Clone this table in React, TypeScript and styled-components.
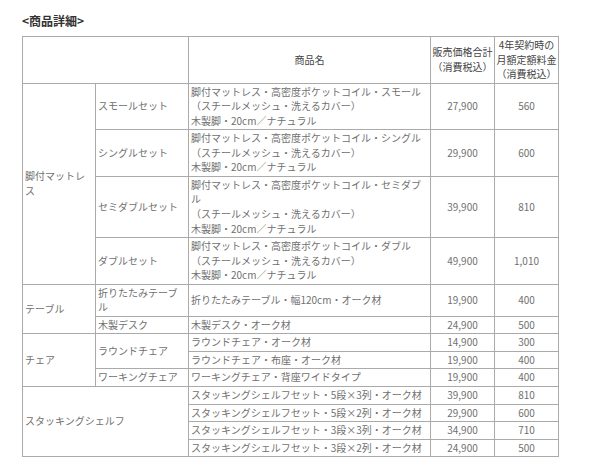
import React from "react";
import styled, { createGlobalStyle } from "styled-components";

const GlobalStyle = createGlobalStyle`
  body {
    margin: 8px;
    background: #fff;
    font-family: "Noto Sans CJK JP", "Noto Sans", sans-serif;
  }
`;

const Page = styled.div`
  padding: 4px 14px 0;
`;

const Title = styled.h3`
  margin: 0 0 6px;
  font-size: 12px;
  line-height: 18px;
  font-weight: bold;
  color: #333;
`;

const Table = styled.table`
  width: 536px;
  table-layout: fixed;
  border-collapse: collapse;
  font-size: 10px;
  line-height: 14.55px;
  color: #707070;
`;

const HeadCell = styled.th`
  border: 1px solid #aaa;
  padding: 1px 0;
  font-weight: normal;
  color: #444;
  text-align: center;
  vertical-align: middle;
  white-space: nowrap;
`;

const Cell = styled.td<{ $align?: "left" | "center" }>`
  border: 1px solid #aaa;
  padding: 1px 2px;
  text-align: ${(p) => p.$align || "left"};
  vertical-align: middle;
  word-break: break-all;
`;

const Price = styled(Cell).attrs({ $align: "center" })``;

interface Item {
  name: React.ReactNode;
  price: string;
  monthly: string;
}

const mattress = (size: string): React.ReactNode => (
  <>
    脚付マットレス・高密度ポケットコイル・{size}
    <br />
    （スチールメッシュ・洗えるカバー）
    <br />
    木製脚・20cm／ナチュラル
  </>
);

const mattressSets: { set: string; item: Item }[] = [
  { set: "スモールセット", item: { name: mattress("スモール"), price: "27,900", monthly: "560" } },
  { set: "シングルセット", item: { name: mattress("シングル"), price: "29,900", monthly: "600" } },
  { set: "セミダブルセット", item: { name: mattress("セミダブル"), price: "39,900", monthly: "810" } },
  { set: "ダブルセット", item: { name: mattress("ダブル"), price: "49,900", monthly: "1,010" } },
];

const shelves: Item[] = [
  { name: "スタッキングシェルフセット・5段×3列・オーク材", price: "39,900", monthly: "810" },
  { name: "スタッキングシェルフセット・5段×2列・オーク材", price: "29,900", monthly: "600" },
  { name: "スタッキングシェルフセット・3段×3列・オーク材", price: "34,900", monthly: "710" },
  { name: "スタッキングシェルフセット・3段×2列・オーク材", price: "24,900", monthly: "500" },
];

const ItemCells = ({ name, price, monthly }: Item) => (
  <>
    <Cell>{name}</Cell>
    <Price>{price}</Price>
    <Price>{monthly}</Price>
  </>
);

const App = () => {
  return (
    <Page>
      <GlobalStyle />
      <Title>&lt;商品詳細&gt;</Title>
      <Table>
        <colgroup>
          <col style={{ width: 73 }} />
          <col style={{ width: 93 }} />
          <col style={{ width: 242 }} />
          <col style={{ width: 64 }} />
          <col style={{ width: 64 }} />
        </colgroup>
        <thead>
          <tr>
            <HeadCell colSpan={2} />
            <HeadCell>商品名</HeadCell>
            <HeadCell>
              販売価格合計
              <br />
              （消費税込）
            </HeadCell>
            <HeadCell>
              4年契約時の
              <br />
              月額定額料金
              <br />
              （消費税込）
            </HeadCell>
          </tr>
        </thead>
        <tbody>
          {mattressSets.map((m, i) => (
            <tr key={m.set}>
              {i === 0 && <Cell rowSpan={4}>脚付マットレス</Cell>}
              <Cell>{m.set}</Cell>
              <ItemCells {...m.item} />
            </tr>
          ))}
          <tr>
            <Cell rowSpan={2}>テーブル</Cell>
            <Cell>折りたたみテーブル</Cell>
            <ItemCells name="折りたたみテーブル・幅120cm・オーク材" price="19,900" monthly="400" />
          </tr>
          <tr>
            <Cell>木製デスク</Cell>
            <ItemCells name="木製デスク・オーク材" price="24,900" monthly="500" />
          </tr>
          <tr>
            <Cell rowSpan={3}>チェア</Cell>
            <Cell rowSpan={2}>ラウンドチェア</Cell>
            <ItemCells name="ラウンドチェア・オーク材" price="14,900" monthly="300" />
          </tr>
          <tr>
            <ItemCells name="ラウンドチェア・布座・オーク材" price="19,900" monthly="400" />
          </tr>
          <tr>
            <Cell>ワーキングチェア</Cell>
            <ItemCells name="ワーキングチェア・背座ワイドタイプ" price="19,900" monthly="400" />
          </tr>
          {shelves.map((s, i) => (
            <tr key={i}>
              {i === 0 && (
                <Cell colSpan={2} rowSpan={4}>
                  スタッキングシェルフ
                </Cell>
              )}
              <ItemCells {...s} />
            </tr>
          ))}
        </tbody>
      </Table>
    </Page>
  );
};

export default App;
